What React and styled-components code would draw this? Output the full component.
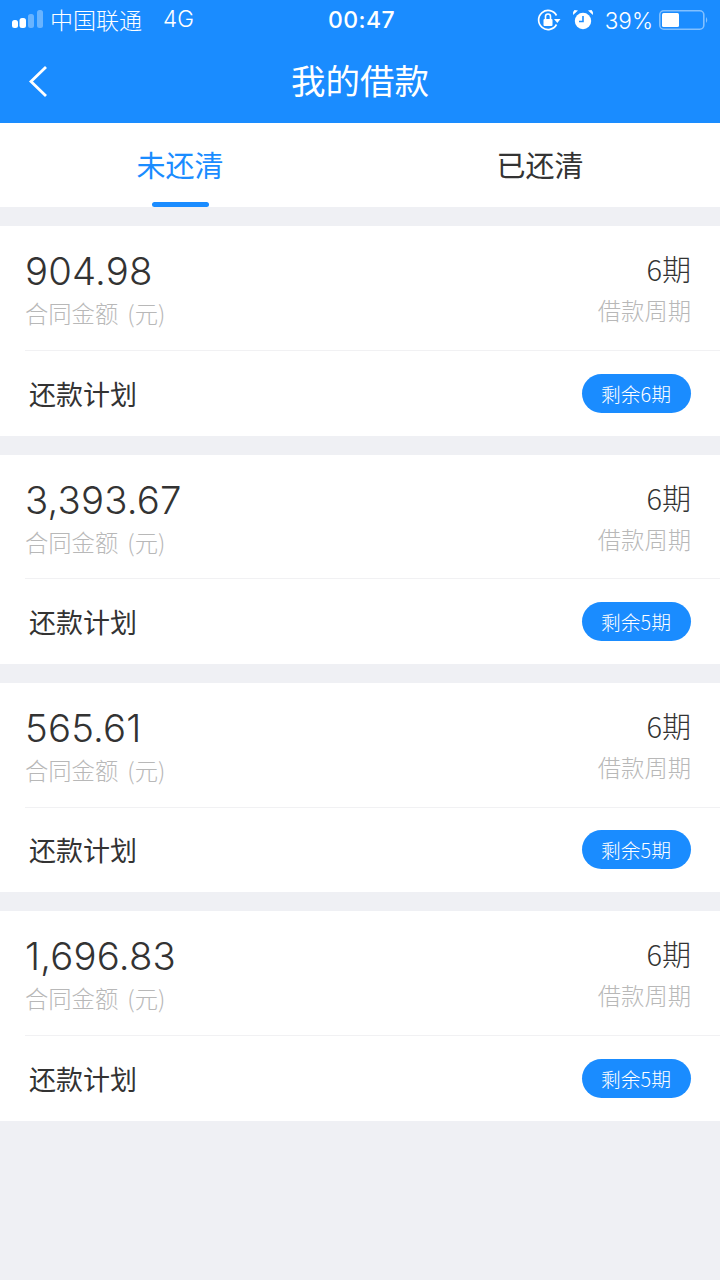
import React from 'react'
import styled, { createGlobalStyle } from 'styled-components'

const BLUE = '#1a8cff'
const CJK = '"Noto Sans CJK SC", sans-serif'
const LATIN = 'Inter, "Noto Sans CJK SC", sans-serif'

const GlobalStyle = createGlobalStyle`
  html, body {
    margin: 0;
    padding: 0;
    background: #eff0f4;
  }
  * { box-sizing: border-box; }
`
const Page = styled.div`
  width: 720px;
  height: 1280px;
  overflow: hidden;
  background: #eff0f4;
  font-family: ${LATIN};
`
const Header = styled.header`
  height: 123px;
  background: ${BLUE};
  color: #fff;
`
const StatusBar = styled.div`
  height: 40px;
  padding: 0 11px 0 11px;
  display: grid;
  grid-template-columns: 1fr auto 1fr;
  align-items: center;
`
const StatusLeft = styled.div`
  display: flex;
  align-items: center;
  font-size: 23px;
  line-height: 36px;
  margin-top: -2px;
  font-family: ${CJK};
  font-weight: 300;
`
const Network = styled.span`
  margin-left: 21px;
  font-family: ${LATIN};
  font-size: 22.5px;
  font-weight: 300;
`
const Clock = styled.div`
  font-family: ${LATIN};
  font-weight: 500;
  font-size: 23px;
  letter-spacing: 0.4px;
  margin-left: 3px;
`
const StatusRight = styled.div`
  display: flex;
  align-items: center;
  justify-content: flex-end;
`
const Percent = styled.span`
  font-size: 22.5px;
  font-weight: 300;
  margin-left: 11px;
  margin-right: 6px;
`
const NavBar = styled.div`
  position: relative;
  height: 83px;
  display: flex;
  align-items: center;
  justify-content: center;
  padding-bottom: 4px;
`
const BackButton = styled.svg`
  position: absolute;
  left: 28px;
  top: 25px;
`
const Title = styled.h1`
  margin: 0;
  font-family: ${CJK};
  font-size: 34.5px;
  font-weight: 400;
  line-height: 1;
`
const Tabs = styled.nav`
  height: 84px;
  background: #fff;
  display: flex;
`
const Tab = styled.div`
  position: relative;
  flex: 1;
  text-align: center;
  padding-top: 21px;
  font-family: ${CJK};
  font-size: 29px;
  line-height: 40px;
  color: ${(p) => (p.$active ? BLUE : '#333')};
  ${(p) =>
    p.$active &&
    `&::after {
      content: '';
      position: absolute;
      left: 152px;
      bottom: 0;
      width: 57px;
      height: 5px;
      border-radius: 3px;
      background: ${BLUE};
    }`}
`
const List = styled.main`
  padding-top: 19.2px;
  display: flex;
  flex-direction: column;
  gap: 19px;
`
const Card = styled.section`
  height: 209.4px;
  background: #fff;
  padding-left: 25px;
`
const Summary = styled.div`
  height: 124.6px;
  padding: 22px 29px 0 0;
  display: flex;
  justify-content: space-between;
  border-bottom: 1px solid #f1f1f3;
`
const Column = styled.div`
  display: flex;
  flex-direction: column;
  align-items: ${(p) => (p.$right ? 'flex-end' : 'flex-start')};
`
const Amount = styled.div`
  font-family: Inter, sans-serif;
  font-weight: 300;
  font-size: 38.3px;
  letter-spacing: 0.2px;
  line-height: 46px;
  margin-bottom: 1px;
  color: #333;
`
const Caption = styled.div`
  font-family: ${CJK};
  font-weight: 300;
  font-size: 23.3px;
  line-height: 36px;
  word-spacing: 4px;
  color: #b8b8b8;
`
const Term = styled.div`
  font-family: ${CJK};
  font-size: 29px;
  font-weight: 300;
  line-height: 42px;
  margin-top: -1px;
  margin-bottom: 3px;
  color: #333;
`
const Plan = styled.div`
  height: 84.8px;
  padding: 0 29px 0 4px;
  display: flex;
  align-items: center;
  justify-content: space-between;
`
const PlanLabel = styled.span`
  font-family: ${CJK};
  font-size: 27px;
  color: #333;
`
const Badge = styled.span`
  height: 39px;
  padding: 0 20px 0 19px;
  border-radius: 20px;
  background: ${BLUE};
  color: #fff;
  font-family: ${CJK};
  font-weight: 300;
  font-size: 19.8px;
  display: flex;
  align-items: center;
`

const SignalBars = () => (
  <svg width="34" height="22" viewBox="0 0 34 22" style={{ marginRight: 5 }}>
    <rect x="1" y="12" width="6" height="8" rx="2.5" fill="#fff" />
    <rect x="8.5" y="10" width="6.5" height="10" rx="2.5" fill="#fff" />
    <rect x="17" y="6" width="6" height="14" rx="2.5" fill="#fff" opacity="0.35" />
    <rect x="26" y="2" width="6" height="18" rx="2.5" fill="#fff" opacity="0.35" />
  </svg>
)

const RotationLock = () => (
  <svg width="24" height="24" viewBox="0 0 24 24" fill="none">
    <path d="M19.5 7.5 A9.5 9.5 0 1 0 19.5 16.5" stroke="#fff" strokeWidth="1.7" />
    <path d="M17 11 h6.5 l-3.2 4 z" fill="#fff" />
    <rect x="6.5" y="11" width="9" height="7" rx="1" fill="#fff" />
    <path d="M8.5 11 V8.5 a2.5 2.5 0 0 1 5 0 V11" stroke="#fff" strokeWidth="1.6" />
  </svg>
)

const Alarm = () => (
  <svg width="22" height="22" viewBox="0 0 22 22" style={{ marginLeft: 11 }}>
    <circle cx="11" cy="12" r="8.2" fill="#fff" />
    <path d="M11 7 V12.5 H7" stroke={BLUE} strokeWidth="1.6" fill="none" />
    <path d="M1 6 L6 1.5 L2.5 1 Q0.5 2.5 1 6 Z" fill="#fff" />
    <path d="M21 6 L16 1.5 L19.5 1 Q21.5 2.5 21 6 Z" fill="#fff" />
  </svg>
)

const Battery = () => (
  <svg width="50" height="22" viewBox="0 0 50 22">
    <rect x="0.8" y="1.8" width="44" height="18.4" rx="4" fill="none" stroke="#fff" strokeOpacity="0.45" strokeWidth="1.6" />
    <rect x="3" y="4" width="17" height="14" rx="1.5" fill="#fff" />
    <path d="M47 8 Q49.5 11 47 14 Z" fill="#fff" fillOpacity="0.45" />
  </svg>
)

const loans = [
  { amount: '904.98', left: 6 },
  { amount: '3,393.67', left: 5 },
  { amount: '565.61', left: 5 },
  { amount: '1,696.83', left: 5 },
]

export default function App() {
  return (
    <Page>
      <GlobalStyle />
      <Header>
        <StatusBar>
          <StatusLeft>
            <SignalBars />
            中国联通
            <Network>4G</Network>
          </StatusLeft>
          <Clock>00:47</Clock>
          <StatusRight>
            <RotationLock />
            <Alarm />
            <Percent>39%</Percent>
            <Battery />
          </StatusRight>
        </StatusBar>
        <NavBar>
          <BackButton width="20" height="32" viewBox="0 0 20 32" fill="none">
            <path d="M18 2 L3 16.5 L18 31" stroke="#fff" strokeWidth="2.8" />
          </BackButton>
          <Title>我的借款</Title>
        </NavBar>
      </Header>
      <Tabs>
        <Tab $active>未还清</Tab>
        <Tab>已还清</Tab>
      </Tabs>
      <List>
        {loans.map((loan) => (
          <Card key={loan.amount}>
            <Summary>
              <Column>
                <Amount>{loan.amount}</Amount>
                <Caption>合同金额 (元)</Caption>
              </Column>
              <Column $right>
                <Term>6期</Term>
                <Caption>借款周期</Caption>
              </Column>
            </Summary>
            <Plan>
              <PlanLabel>还款计划</PlanLabel>
              <Badge>剩余{loan.left}期</Badge>
            </Plan>
          </Card>
        ))}
      </List>
    </Page>
  )
}
